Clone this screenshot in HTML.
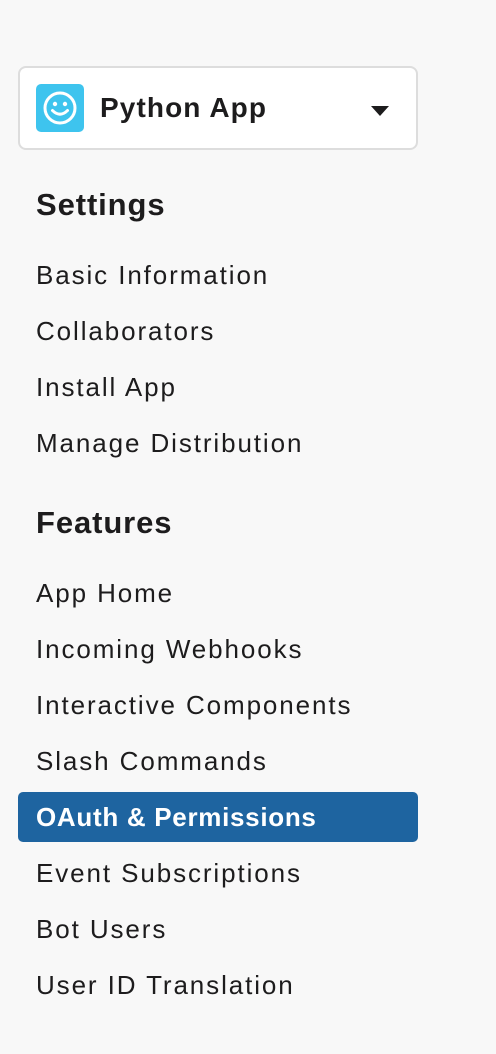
<!DOCTYPE html>
<html><head><style>
body{margin:0;width:496px;height:1054px;background:#f8f8f8;font-family:"Liberation Sans",sans-serif;color:#1d1c1d;position:relative;overflow:hidden}
.box{position:absolute;left:18px;top:66px;width:396px;height:80px;border:2px solid #dddddd;border-radius:8px;background:#fff}
.icon{position:absolute;left:16px;top:16px;width:48px;height:48px;border-radius:5px;background:#3ec4ee}
.name{position:absolute;left:80px;top:22px;font-size:28px;font-weight:bold;line-height:36px;letter-spacing:1.1px}
.caret{position:absolute;left:351px;top:38px;width:0;height:0;border-left:9px solid transparent;border-right:9px solid transparent;border-top:10px solid #1d1c1d}
h2{position:absolute;left:36px;margin:0;font-size:31px;font-weight:bold;line-height:40px;letter-spacing:0.9px}
.it{position:absolute;left:36px;font-size:26px;line-height:34px;letter-spacing:1.9px}
.sel{position:absolute;left:18px;top:792px;width:400px;height:50px;background:#1e64a0;border-radius:5px}
</style></head><body>
<div class="box"><div class="icon"><svg width="48" height="48" viewBox="0 0 48 48"><circle cx="24" cy="24" r="15" fill="none" stroke="#fff" stroke-width="3"/><circle cx="19" cy="20" r="2.2" fill="#fff"/><circle cx="29" cy="20" r="2.2" fill="#fff"/><path d="M16.5 26.5 Q24 34 31.5 26.5" fill="none" stroke="#fff" stroke-width="3" stroke-linecap="round"/></svg></div><div class="name">Python App</div><div class="caret"></div></div>
<h2 style="top:185px">Settings</h2>
<div class="it" style="top:258px">Basic Information</div>
<div class="it" style="top:314px">Collaborators</div>
<div class="it" style="top:370px">Install App</div>
<div class="it" style="top:426px">Manage Distribution</div>
<h2 style="top:503px">Features</h2>
<div class="it" style="top:576px">App Home</div>
<div class="it" style="top:632px">Incoming Webhooks</div>
<div class="it" style="top:688px">Interactive Components</div>
<div class="it" style="top:744px">Slash Commands</div>
<div class="sel"></div>
<div class="it" style="top:800px;color:#fff;font-weight:bold;letter-spacing:0.7px">OAuth &amp; Permissions</div>
<div class="it" style="top:856px">Event Subscriptions</div>
<div class="it" style="top:912px">Bot Users</div>
<div class="it" style="top:968px">User ID Translation</div>
</body></html>
